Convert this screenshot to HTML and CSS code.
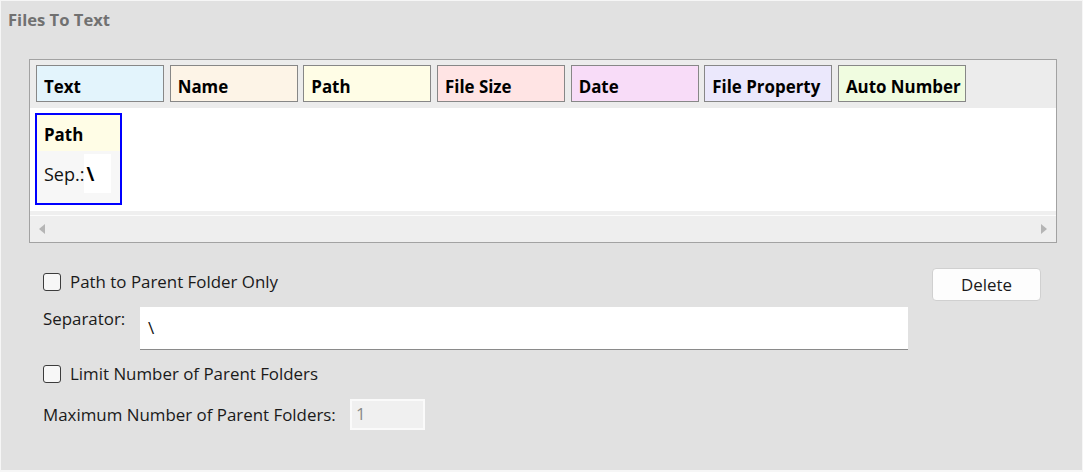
FILE: index.html
```html
<!DOCTYPE html>
<html>
<head>
<meta charset="utf-8">
<link rel="stylesheet" href="styles.css">
</head>
<body>
<div class="window">
  <div class="title">Files To Text</div>
  <div class="panel">
    <div class="tokens">
      <div class="token t-text">Text</div>
      <div class="token t-name">Name</div>
      <div class="token t-path">Path</div>
      <div class="token t-size">File Size</div>
      <div class="token t-date">Date</div>
      <div class="token t-prop">File Property</div>
      <div class="token t-auto">Auto Number</div>
    </div>
    <div class="canvas">
      <div class="item">
        <div class="item-head">Path</div>
        <div class="item-body">Sep.:<span class="sepval">\</span></div>
      </div>
    </div>
    <div class="band"></div>
    <div class="hscroll">
      <span class="arrow arrow-left"></span>
      <span class="arrow arrow-right"></span>
    </div>
  </div>
  <div class="options">
    <div class="opt-col">
      <label class="check-row row1"><span class="box"></span><span>Path to Parent Folder Only</span></label>
      <div class="field-row row2">
        <span class="field-label">Separator:</span>
        <div class="sep-input">\</div>
      </div>
      <label class="check-row row3"><span class="box"></span><span>Limit Number of Parent Folders</span></label>
      <div class="field-row row4">
        <span class="field-label">Maximum Number of Parent Folders:</span>
        <div class="num-input">1</div>
      </div>
    </div>
    <button class="btn">Delete</button>
  </div>
</div>
</body>
</html>
```
FILE: styles.css
```css
* { box-sizing: border-box; }
html, body { margin: 0; padding: 0; }
body {
  width: 1083px;
  height: 472px;
  overflow: hidden;
  font-family: "Open Sans", "Noto Sans", sans-serif;
  color: #1a1a1a;
  background: #e1e1e1;
}
.window {
  width: 1083px;
  height: 472px;
  background: #e1e1e1;
  border: 1px solid #f6f6f6;
  border-bottom-width: 2px;
  display: flex;
  flex-direction: column;
}
.title {
  font-weight: bold;
  font-size: 16.6px;
  color: #717171;
  padding: 8px 0 0 7px;
  height: 58px;
  line-height: 22px;
}
.panel {
  margin-left: 28px;
  width: 1028px;
  height: 184px;
  border: 1px solid #a2a2a2;
  display: flex;
  flex-direction: column;
  background: #eeeeee;
}
.tokens {
  height: 48px;
  background: #ececec;
  display: flex;
  gap: 5.67px;
  padding: 5px 0 0 6px;
}
.token {
  width: 128px;
  height: 37px;
  border: 1px solid #878787;
  font-weight: bold;
  font-size: 16.9px;
  color: #000;
  padding: 10px 0 0 7px;
  line-height: 22px;
  white-space: nowrap;
}
.t-text { background: #e3f4fc; }
.t-name { background: #fdf4e7; }
.t-path { background: #fffde6; }
.t-size { background: #ffe4e4; }
.t-date { background: #f8dcf8; }
.t-prop { background: #ebe8fc; }
.t-auto { background: #f0fce0; }
.canvas {
  height: 103px;
  background: #fff;
  padding: 5px 0 0 5px;
}
.item {
  width: 87px;
  height: 92px;
  border: 2px solid #0000ff;
  display: flex;
  flex-direction: column;
}
.item-head {
  height: 36px;
  background: #fffde6;
  font-weight: bold;
  font-size: 16.9px;
  color: #000;
  padding: 9px 0 0 7px;
  line-height: 22px;
}
.item-body {
  flex: 1;
  background: #f7f7f7;
  font-size: 18px;
  color: #111;
  display: flex;
  align-items: flex-start;
  padding: 3px 0 0 7px;
  line-height: 41px;
}
.sepval {
  background: #fff;
  width: 27px;
  height: 39px;
  font-weight: bold;
  font-size: 19px;
  color: #000;
  padding-left: 2px;
  line-height: 40px;
}
.band {
  height: 5px;
  background: #efefef;
  border-bottom: 1px solid #fcfcfc;
}
.hscroll {
  flex: 1;
  background: #eeeeee;
  display: flex;
  justify-content: space-between;
  align-items: center;
  padding: 0 9px 0 9px;
}
.arrow {
  width: 0;
  height: 0;
  border-top: 5px solid transparent;
  border-bottom: 5px solid transparent;
}
.arrow-left { border-right: 6px solid #b5b5b5; }
.arrow-right { border-left: 6px solid #b5b5b5; }
.options {
  display: flex;
  align-items: flex-start;
  padding-left: 42px;
}
.opt-col {
  flex: 1;
  display: flex;
  flex-direction: column;
}
.check-row {
  display: flex;
  align-items: center;
  gap: 9px;
  height: 18px;
  font-size: 16.9px;
  line-height: 18px;
}
.box {
  width: 18px;
  height: 18px;
  border: 1px solid #3c3c3c;
  border-radius: 3px;
  background: #f7f7f7;
}
.row1 { margin-top: 30px; }
.row2 { margin-top: 16px; }
.row3 { margin-top: 15px; }
.row4 { margin-top: 16px; }
.field-row {
  display: flex;
  align-items: flex-start;
  font-size: 16.9px;
}
.row2 .field-label { padding-top: 1px; width: 97px; line-height: 22px; }
.sep-input {
  width: 768px;
  height: 43px;
  background: #fff;
  border-bottom: 1px solid #8a8a8a;
  padding: 10px 0 0 8px;
  font-size: 17px;
  line-height: 22px;
  color: #111;
}
.row4 { align-items: center; }
.row4 .field-label { width: 307px; }
.num-input {
  width: 75px;
  height: 31px;
  background: #f0f0f0;
  border: 2px solid #fafafa;
  color: #8a8a8a;
  font-size: 16.9px;
  line-height: 25px;
  padding-left: 4px;
}
.btn {
  margin: 25px 41px 0 0;
  width: 109px;
  height: 33px;
  background: #fdfdfd;
  border: 1px solid #d0d0d0;
  border-radius: 4px;
  font-family: "Open Sans", "Noto Sans", sans-serif;
  font-size: 16.9px;
  color: #1a1a1a;
  padding: 0;
}
```
